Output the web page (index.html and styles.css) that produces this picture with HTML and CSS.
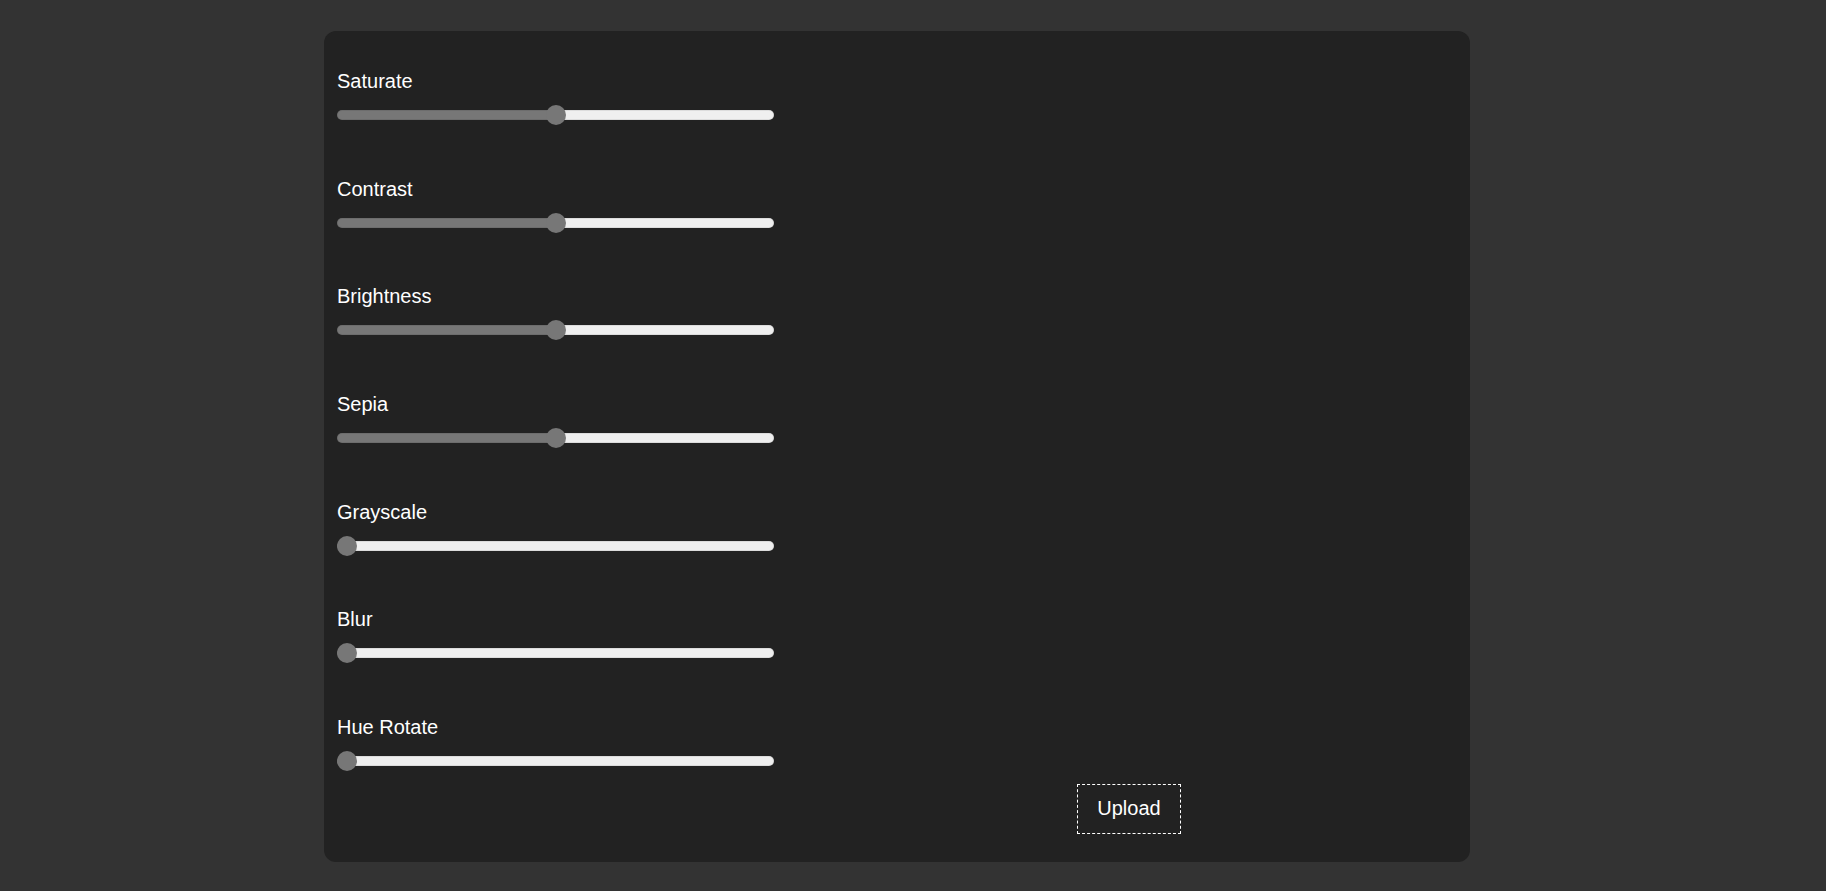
FILE: index.html
```html
<!DOCTYPE html>
<html lang="en">
<head>
<meta charset="utf-8">
<title>Image Filters</title>
<link rel="stylesheet" href="styles.css">
</head>
<body>
<div class="editor">
  <div class="controls">
    <div class="control">
      <label class="control-label" for="saturate">Saturate</label>
      <input class="slider" id="saturate" type="range" min="0" max="200" value="100" style="--fill: 50%">
    </div>
    <div class="control">
      <label class="control-label" for="contrast">Contrast</label>
      <input class="slider" id="contrast" type="range" min="0" max="200" value="100" style="--fill: 50%">
    </div>
    <div class="control">
      <label class="control-label" for="brightness">Brightness</label>
      <input class="slider" id="brightness" type="range" min="0" max="200" value="100" style="--fill: 50%">
    </div>
    <div class="control">
      <label class="control-label" for="sepia">Sepia</label>
      <input class="slider" id="sepia" type="range" min="0" max="200" value="100" style="--fill: 50%">
    </div>
    <div class="control">
      <label class="control-label" for="grayscale">Grayscale</label>
      <input class="slider" id="grayscale" type="range" min="0" max="100" value="0" style="--fill: 0%">
    </div>
    <div class="control">
      <label class="control-label" for="blur">Blur</label>
      <input class="slider" id="blur" type="range" min="0" max="10" value="0" style="--fill: 0%">
    </div>
    <div class="control">
      <label class="control-label" for="hue">Hue Rotate</label>
      <input class="slider" id="hue" type="range" min="0" max="360" value="0" style="--fill: 0%">
    </div>
  </div>
  <div class="preview">
    <button class="upload" type="button">Upload</button>
  </div>
</div>
</body>
</html>
```

FILE: styles.css
```css
html, body {
  margin: 0;
  padding: 0;
}

body {
  background: #333333;
  font-family: "Liberation Sans", Arial, sans-serif;
  color: #ffffff;
  height: 891px;
  overflow: hidden;
}

.editor {
  box-sizing: border-box;
  margin: 31px 0 0 324px;
  width: 1146px;
  height: 831px;
  background: #222222;
  border-radius: 12px;
  display: flex;
  padding: 0 0 28px 13px;
}

.controls {
  display: flex;
  flex-direction: column;
  gap: 52.7px;
  padding-top: 39px;
  width: 437px;
}

.control {
  display: flex;
  flex-direction: column;
  gap: 12px;
}

.control-label {
  font-size: 20px;
  line-height: 23px;
  color: #ffffff;
}

.slider {
  -webkit-appearance: none;
  appearance: none;
  margin: 0;
  width: 437px;
  height: 20px;
  background: transparent;
  display: block;
}

.slider::-webkit-slider-runnable-track {
  height: 10px;
  border-radius: 5px;
  background: linear-gradient(to right, #777777 0, #777777 calc(10px + (100% - 20px) * var(--fill) / 100%), #efefef calc(10px + (100% - 20px) * var(--fill) / 100%), #efefef 100%);
  box-shadow: inset 0 0 0 1px rgba(0, 0, 0, 0.08);
}

.slider::-webkit-slider-thumb {
  -webkit-appearance: none;
  appearance: none;
  width: 20px;
  height: 20px;
  border-radius: 50%;
  background: #777777;
  margin-top: -5px;
  border: none;
}

.preview {
  flex: 1;
  display: flex;
  flex-direction: column;
  justify-content: flex-end;
  align-items: center;
  padding-left: 14px;
}

.upload {
  font-family: "Liberation Sans", Arial, sans-serif;
  font-size: 20px;
  line-height: 23px;
  color: #ffffff;
  background: transparent;
  border: 1px dashed #ffffff;
  padding: 12px 19px 13px;
  margin: 0;
  cursor: pointer;
}
```
